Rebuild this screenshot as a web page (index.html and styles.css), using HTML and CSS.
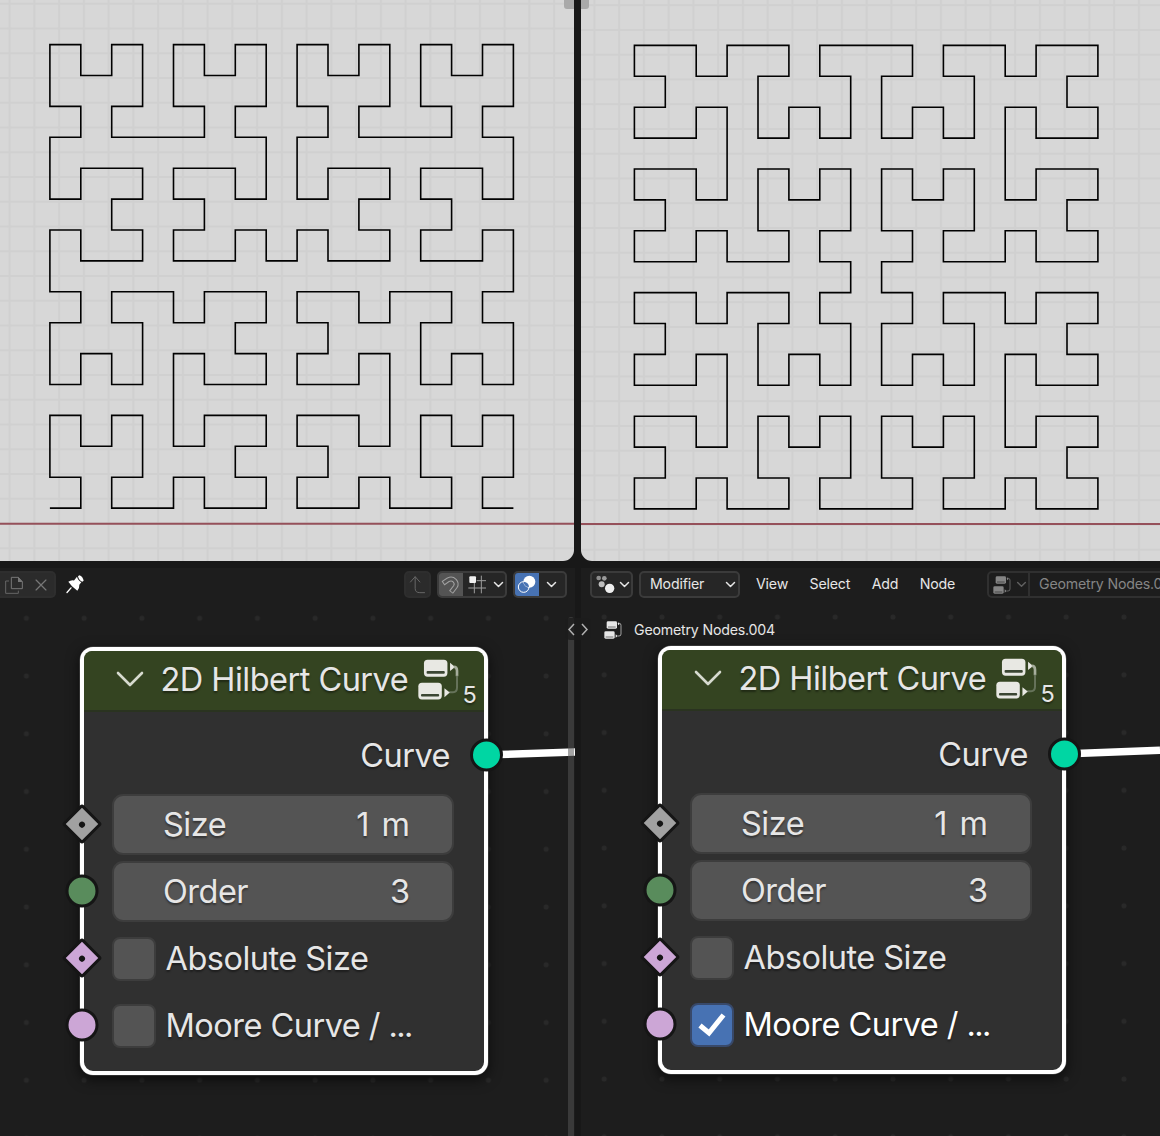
FILE: index.html
```html
<!DOCTYPE html>
<html lang="en">
<head>
<meta charset="utf-8">
<title>2D Hilbert Curve</title>
<link rel="stylesheet" href="styles.css">
</head>
<body>
<svg class="defs" aria-hidden="true">
  <symbol id="i-group" viewBox="235 88 124 126">
    <rect x="253" y="90" width="71" height="51" rx="11" fill="#e8e8e3"/>
    <rect x="261" y="124" width="55" height="8" rx="3" fill="#3b4633"/>
    <rect x="236" y="159" width="71" height="51" rx="11" fill="#e8e8e3"/>
    <rect x="244" y="193" width="55" height="8" rx="3" fill="#3b4633"/>
    <path d="M332 99v25l15-12z" fill="#e8e8e3"/>
    <path d="M343 111q10 0 10 12v17" fill="none" stroke="#a7ae9d" stroke-width="8"/>
    <path d="M353 138v36q0 14-12 14h-12" fill="none" stroke="#66735a" stroke-width="6"/>
    <path d="M315 176v27l16-14z" fill="#e8e8e3"/>
  </symbol>
  <symbol id="i-tree" viewBox="0 0 54 54">
    <rect x="8" y="1" width="31" height="22" rx="4" fill="currentColor"/>
    <path d="M12 18h23" stroke="#1d1d1d" stroke-opacity=".7" stroke-width="2.500"/>
    <rect x="1" y="31" width="31" height="22" rx="4" fill="currentColor"/>
    <path d="M5 48h23" stroke="#1d1d1d" stroke-opacity=".7" stroke-width="2.500"/>
    <path d="M41 7h5q5 0 5 6v26q0 6-6 6h-4" fill="none" stroke="currentColor" stroke-width="3" opacity=".65"/>
    <path d="M42 4v9l5-4zM35 40v10l6-5z" fill="currentColor"/>
  </symbol>
  <symbol id="i-down" viewBox="0 0 30 20">
    <path d="M4 4l11 11L26 4" fill="none" stroke="currentColor" stroke-width="4" stroke-linecap="round" stroke-linejoin="round"/>
  </symbol>
  <symbol id="i-fold" viewBox="0 0 28 18">
    <path d="M2 3l12 12L26 3" fill="none" stroke="currentColor" stroke-width="2.6" stroke-linecap="round" stroke-linejoin="round"/>
  </symbol>
</svg>

<main class="screen">
  <section class="view view-left">
    <svg width="574" height="561">
      <defs><pattern id="gl" x="9.6" y="3.75" width="24.75" height="24.75" patternUnits="userSpaceOnUse"><path d="M0 0H24.75M0 24.75H24.75M0 0V24.75M24.75 0V24.75" stroke="#d0d0d0" stroke-width="2.2"/></pattern></defs>
      <rect width="574" height="561" fill="url(#gl)"/>
      <path d="M0 523.7H575" class="axis"/>
      <path id="hilbert" class="curve"/>
      <path d="M564 0h11v9h-8q-3 0-3-3z" fill="#a9a9a9"/>
    </svg>
  </section>
  <section class="view view-right">
    <svg width="579" height="561">
      <defs><pattern id="gr" x="13.4" y="5.2" width="24.75" height="24.75" patternUnits="userSpaceOnUse"><path d="M0 0H24.75M0 24.75H24.75M0 0V24.75M24.75 0V24.75" stroke="#d0d0d0" stroke-width="2.2"/></pattern></defs>
      <rect width="579" height="561" fill="url(#gr)"/>
      <path d="M0 524H579" class="axis"/>
      <path id="moore" class="curve"/>
      <path d="M0 0h8v6q0 3-3 3H0z" fill="#a9a9a9"/>
    </svg>
  </section>

  <section class="editor">
    <header class="toolbar">
      <div class="group dim data">
        <svg width="18" height="18" viewBox="17 76 54 54"><path d="M36 80h21l12 13v21H36z" fill="none" stroke="#777" stroke-width="3"/><path d="M56 79l14 15H56z" fill="#777"/><path d="M29 91H19v37h38v-8" fill="none" stroke="#666" stroke-width="3"/></svg>
        <svg width="12" height="12" viewBox="108 87 34 34"><path d="M111 90l28 28M139 90l-28 28" stroke="#777" stroke-width="3.5" stroke-linecap="round"/></svg>
      </div>
      <svg class="pin" width="18" height="19" viewBox="200 77 54 56"><path d="M236 80l4-3q11 4 13 17l-4 3q-10-4-13-17zM233 82q3 12 13 16l-6 8q1 10-6 18l-16-14-11-13q8-6 17-4z" fill="#fff"/><path d="M215 115l-12 14" stroke="#fff" stroke-width="4" stroke-linecap="round"/></svg>
      <div class="spacer"></div>
      <div class="group dim up"><svg width="17" height="20" viewBox="88 76 50 60"><path d="M92 97l14-16 14 16M106 82v34q0 13 14 13h14" fill="none" stroke="#686868" stroke-width="3" stroke-linecap="round"/></svg></div>
      <div class="group snap">
        <div class="cell magnet"><svg width="20" height="20" viewBox="182 74 60 60"><path d="M188 99l16-11q11-5 19 3 8 9 2 18l-13 17" fill="none" stroke="#a0a0a0" stroke-width="15"/><path d="M190.500 97.300l13.500-9.300q11-5 19 3 8 9 2 18l-11.200 14.600" fill="none" stroke="#545454" stroke-width="8.500"/></svg></div>
        <svg width="19" height="19" viewBox="264 76 57 57"><path d="M283 94v37M304 78v53M290 93h28M265 115h53" stroke="#9d9d9d" stroke-width="3" fill="none"/><rect x="268" y="80" width="20" height="20" rx="3" fill="#f0f0f0"/></svg>
        <svg class="chev" width="11" height="7.300"><use href="#i-down"/></svg>
      </div>
      <div class="group overlay">
        <div class="cell blue"><svg width="20" height="20" viewBox="410 75 60 60"><circle cx="447" cy="95" r="18" fill="#fff"/><circle cx="430" cy="111" r="16" fill="none" stroke="#fff" stroke-width="3"/><path d="M430 95a16 16 0 0 1 16 16 17 17 0 0 1-16-16z" fill="#4772b3"/></svg></div>
        <svg class="chev" width="11" height="7.300"><use href="#i-down"/></svg>
      </div>
    </header>
    <div class="canvas">
      <svg class="back" width="575" height="536">
        <defs><pattern id="dl" x="-2.5" y="-10.6" width="57.75" height="57.75" patternUnits="userSpaceOnUse"><circle cx="28.9" cy="28.9" r="2.5" fill="#292929"/></pattern></defs>
        <rect width="575" height="536" fill="url(#dl)"/>
        <path d="M498 154.6L575 152" stroke="#fff" stroke-width="7.5"/>
      </svg>
      <article class="node node-a">
        <div class="title"><svg class="fold" width="28" height="18"><use href="#i-fold"/></svg><span>2D Hilbert Curve</span><svg class="grp" width="41" height="42"><use href="#i-group"/></svg><small>5</small></div>
        <div class="row out"><span>Curve</span><i class="dot teal"></i></div>
        <div class="row"><i class="dia grey"></i><div class="field"><span>Size</span><span>1 m</span></div></div>
        <div class="row"><i class="dot green"></i><div class="field"><span>Order</span><span>3</span></div></div>
        <div class="row"><i class="dia pink"></i><div class="box"></div><span>Absolute Size</span></div>
        <div class="row"><i class="dot pink"></i><div class="box"></div><span>Moore Curve / <span class="more">...</span></span></div>
      </article>
      <div class="scroll"></div>
    </div>
  </section>

  <section class="editor">
    <header class="toolbar right">
      <div class="group type">
        <svg width="19" height="19" viewBox="646 76 57 57"><circle cx="654" cy="85" r="7" fill="#8c8c8c"/><circle cx="671" cy="86" r="7" fill="#9a9a9a"/><circle cx="663" cy="104" r="9" fill="#bdbdbd"/><circle cx="687" cy="116" r="14" fill="#eee"/></svg>
        <svg class="chev" width="11" height="7.300"><use href="#i-down"/></svg>
      </div>
      <div class="group modifier"><span>Modifier</span><svg class="chev" width="11" height="7.300"><use href="#i-down"/></svg></div>
      <nav><span>View</span><span>Select</span><span>Add</span><span>Node</span></nav>
      <div class="group idblock">
        <div class="pick"><svg width="18" height="18"><use href="#i-tree"/></svg><svg class="chev" width="11" height="7"><use href="#i-down"/></svg></div>
        <span>Geometry Nodes.004</span>
      </div>
    </header>
    <div class="canvas">
      <svg class="back" width="579" height="536">
        <defs><pattern id="dr" x="-5.7" y="-11.8" width="57.75" height="57.75" patternUnits="userSpaceOnUse"><circle cx="28.9" cy="28.9" r="2.5" fill="#292929"/></pattern></defs>
        <rect width="579" height="536" fill="url(#dr)"/>
        <path d="M495 153.4L579 150.3" stroke="#fff" stroke-width="7.5"/>
      </svg>
      <div class="crumb"><svg width="18" height="18"><use href="#i-tree"/></svg><span>Geometry Nodes.004</span></div>
      <article class="node node-b">
        <div class="title"><svg class="fold" width="28" height="18"><use href="#i-fold"/></svg><span>2D Hilbert Curve</span><svg class="grp" width="41" height="42"><use href="#i-group"/></svg><small>5</small></div>
        <div class="row out"><span>Curve</span><i class="dot teal"></i></div>
        <div class="row"><i class="dia grey"></i><div class="field"><span>Size</span><span>1 m</span></div></div>
        <div class="row"><i class="dot green"></i><div class="field"><span>Order</span><span>3</span></div></div>
        <div class="row"><i class="dia pink"></i><div class="box"></div><span>Absolute Size</span></div>
        <div class="row on"><i class="dot pink"></i><div class="box"><svg width="28" height="24" viewBox="0 0 28 24"><path d="M2 12.5l9 7.5L25.500 2" fill="none" stroke="#fff" stroke-width="5"/></svg></div><span>Moore Curve / <span class="more">...</span></span></div>
      </article>
    </div>
  </section>
  <svg class="splitter" width="26" height="22"><path d="M9 6L4 11.500l5 5.500M17 6l5 5.500-5 5.500" fill="none" stroke="#b0b0b0" stroke-width="1.500"/></svg>
</main>
<script src="curves.js"></script>
</body>
</html>
```
FILE: styles.css
```css
* { box-sizing: border-box; }
body {
  margin: 0;
  background: #181818;
  color: #e6e6e6;
  font: 14.2px/1 Inter, "Noto Sans", sans-serif;
  letter-spacing: -0.2px;
}
svg { display: block; flex: none; }
.defs { position: absolute; width: 0; height: 0; }
.screen {
  position: relative;
  display: grid;
  grid-template-columns: 575px 579px;
  grid-template-rows: 561px 568px;
  gap: 7px 6px;
  width: 1160px;
  height: 1136px;
  overflow: hidden;
}
.view { background: #d7d7d7; overflow: hidden; }
.view-left { width: 574px; border-bottom-right-radius: 11px; }
.view-right { border-bottom-left-radius: 11px; }
.axis { stroke: #95505a; stroke-width: 2; }
.curve { fill: none; stroke: #000; stroke-width: 1.6; }

.editor { display: flex; flex-direction: column; min-width: 0; background: #1d1d1d; overflow: hidden; }
.toolbar { display: flex; flex: none; align-items: center; height: 33px; padding-right: 8px; }
.group {
  display: flex;
  flex: none;
  align-items: center;
  height: 27px;
  border: 2px solid #3b3b3b;
  border-radius: 5px;
  background: #262626;
  overflow: hidden;
  white-space: nowrap;
}
.dim { background: #2b2b2b; border-color: #2e2e2e; }
.data { width: 56px; border-left: 0; border-radius: 0 5px 5px 0; padding-left: 5px; gap: 12px; }
.pin { margin-left: 10px; }
.spacer { flex: 1; }
.up { width: 27px; justify-content: center; }
.snap { width: 70px; margin-left: 6px; gap: 5px; }
.snap .chev { margin-left: 1px; }
.overlay { width: 54px; margin-left: 6px; }
.overlay .chev { margin-left: 7px; }
.cell { display: flex; align-items: center; justify-content: center; width: 24px; height: 100%; }
.magnet { background: #545454; }
.blue { background: #4772b3; }
.right { padding: 0 0 0 9px; }
.type { width: 43px; gap: 4px; padding-left: 4px; }
.modifier { width: 101px; margin-left: 6px; padding: 0 2px 0 9px; justify-content: space-between; }
nav { display: flex; flex: none; gap: 21.5px; margin-left: 16px; width: 231px; }
.idblock { width: 200px; background: #1d1d1d; border-color: #303030; color: #858585; gap: 9px; }
.pick { display: flex; align-items: center; width: 41px; height: 100%; padding-left: 4px; gap: 5px; border-right: 2px solid #303030; }
.pick .chev { opacity: .65; }

.canvas { position: relative; flex: none; height: 536px; margin-top: -1px; }
.back { position: absolute; left: 0; top: 0; }
.crumb { position: absolute; left: 23px; top: 21px; display: flex; align-items: center; gap: 12px; }
.scroll { position: absolute; left: 568px; top: 17px; width: 6px; bottom: -6px; border-radius: 3px; background: #5558; }
.splitter { position: absolute; left: 565px; top: 618px; border-radius: 5px; background: #1d1d1dcc; }

.node {
  position: absolute;
  width: 408px;
  height: 428px;
  border: 4px solid #fff;
  border-radius: 13px;
  background: #303030;
  box-shadow: 0 0 0 .5px #8888, 0 4px 14px #000a;
  font-size: 32.5px;
  letter-spacing: -0.52px;
  text-shadow: 0 2px 2px #0006;
}
.node span { position: relative; top: 1px; }
.node-a { left: 80px; top: 47px; }
.node-b { left: 77px; top: 46px; }
.title {
  display: flex;
  align-items: center;
  height: 61px;
  margin-bottom: 10px;
  padding-left: 31.5px;
  border-bottom: 2px solid #2a3320;
  border-radius: 8px 8px 0 0;
  background: #344421;
  white-space: nowrap;
}
.node .title > span { top: 0; width: 256px; margin-left: 17px; }
.title small { margin: 29px 0 0 4px; font-size: 23.500px; }
.title .grp { margin: -2px 0 0 1px; }
.fold { margin-top: -4px; color: #d6dacf; }
.row { position: relative; display: flex; align-items: center; height: 67px; padding-left: 28px; white-space: nowrap; }
.out { justify-content: flex-end; margin-bottom: 2px; padding-right: 34px; }
.node .more { top: 0; letter-spacing: -1.7px; }
.field {
  display: flex;
  align-items: center;
  justify-content: space-between;
  width: 342px;
  height: 61px;
  padding: 0 42.5px 0 49px;
  border: 2px solid #3d3d3d;
  border-radius: 11px;
  background: #545454;
  word-spacing: 4px;
}
.box {
  display: flex;
  align-items: center;
  justify-content: center;
  width: 44px;
  height: 44px;
  margin-right: 9.5px;
  border: 2px solid #3d3d3d;
  border-radius: 8px;
  background: #545454;
}
.on { color: #fff; }
.on .box { background: #4772b3; border-color: #38496a; }
.dot, .dia { position: absolute; top: 33px; left: -2px; transform: translate(-50%, -50%); border: 3px solid #151515; }
.dot { width: 33px; height: 33px; border-radius: 50%; }
.dia { width: 29px; height: 29px; border-radius: 3px; transform: translate(-50%, -50%) rotate(45deg); }
.dia::after { content: ""; position: absolute; left: 8.500px; top: 8.500px; width: 6px; height: 6px; border-radius: 50%; background: #151515; }
.teal { left: auto; right: -18.5px; transform: translateY(-50%); background: #00d6a3; }
.grey { background: #a1a1a1; }
.green { background: #598c5c; }
.pink { background: #cca6d6; }
```
FILE: curves.js
```javascript
// Hilbert points on a 2^n grid, running from the lower left to the lower right cell.
function hilbert(n) {
  if (n === 0) return [[0, 0]];
  const h = 2 ** (n - 1);
  const p = hilbert(n - 1);
  return [
    ...p.map(([x, y]) => [y, x]),
    ...p.map(([x, y]) => [x, y + h]),
    ...p.map(([x, y]) => [x + h, y + h]),
    ...p.map(([x, y]) => [2 * h - 1 - y, h - 1 - x])
  ];
}

// Four Hilbert curves joined into a closed loop.
function moore(n) {
  const p = hilbert(n - 1);
  const h = 2 ** (n - 1);
  return [
    ...p.map(([x, y]) => [h - 1 - y, x]),
    ...p.map(([x, y]) => [h - 1 - y, x + h]),
    ...p.map(([x, y]) => [h + y, 2 * h - 1 - x]),
    ...p.map(([x, y]) => [h + y, h - 1 - x])
  ];
}

function draw(id, points, left, bottom, close) {
  const step = 30.9;
  const d = points.map(([x, y]) => `${(left + x * step).toFixed(2)} ${(bottom - y * step).toFixed(2)}`);
  document.getElementById(id).setAttribute("d", "M" + d.join("L") + (close ? "Z" : ""));
}

draw("hilbert", hilbert(4), 49.9, 508.1, false);
draw("moore", moore(4), 53.4, 508.9, true);
```
